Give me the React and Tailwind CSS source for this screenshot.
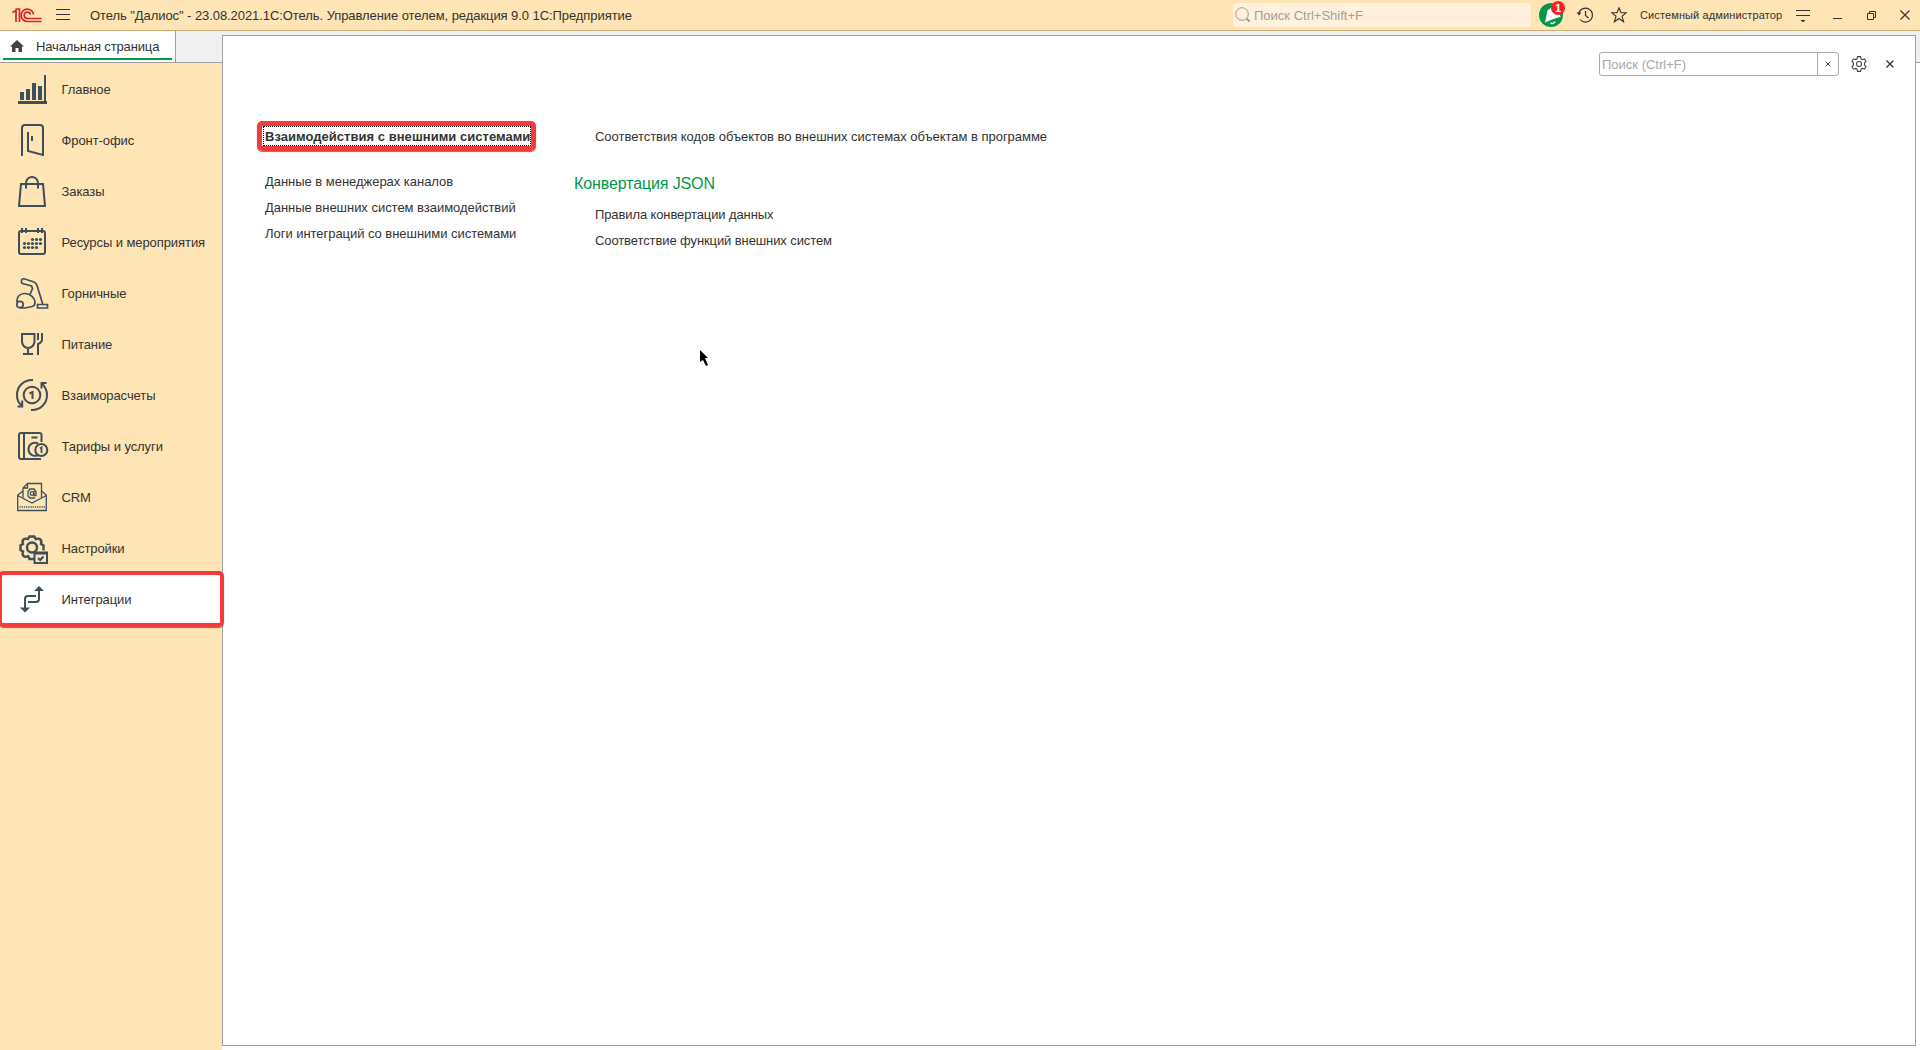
import React from 'react';
import clsx from 'clsx';

const ink = '#3d4f5a';

function Icon({ children, width = 2 }) {
  return (
    <svg
      viewBox="0 0 32 32"
      className="mt-[9px] size-8 shrink-0 overflow-visible"
      fill="none"
      stroke={ink}
      strokeWidth={width}
    >
      {children}
    </svg>
  );
}

const ChartIcon = () => (
  <Icon>
    <path
      d="M2 28h29v3H2zM28 2h2v26h-2zM4 19h4v8H4zM10 16h4v11h-4zM16 10h4v17h-4zM22 13h4v14h-4z"
      fill={ink}
      stroke="none"
    />
  </Icon>
);

const DoorIcon = () => (
  <Icon>
    <path d="M6 32V4q0-3 3-3h15q3 0 3 3v27L12 27V8M16 12v5" />
  </Icon>
);

const BagIcon = () => (
  <Icon>
    <path d="M5 9h22l2 22H3zM10 13.5V8a6 6 0 0 1 12 0v5.5" />
  </Icon>
);

const calendarDots = [
  [16.5, 13.5], [20.5, 13.5], [24.5, 13.5],
  [8.5, 17.5], [12.5, 17.5], [16.5, 17.5], [20.5, 17.5], [24.5, 17.5],
  [8.5, 21.5], [12.5, 21.5], [16.5, 21.5], [20.5, 21.5],
];

const CalendarIcon = () => (
  <Icon>
    <rect x="3" y="5" width="26" height="23" rx="2" />
    <path d="M6 2v5M10 2v5M22 2v5M26 2v5" />
    {calendarDots.map(([x, y]) => (
      <circle key={`${x}-${y}`} cx={x} cy={y} r="1.6" fill={ink} stroke="none" />
    ))}
  </Icon>
);

const VacuumIcon = () => (
  <Icon width={1.7}>
    <path d="M14 17.5l2.5-6-1-2.5L6.500 6.500Q5 5.500 5.500 3.500T8 1.800L18 5q2.500 1 3.200 4l5.500 18" />
    <path d="M1 25V23c.5-4 4-6.500 8-6.500 5.500 0 10 4.500 10 9 0 2-1 3.500-3 4L9 31H4" />
    <circle cx="4" cy="27.5" r="3.2" />
    <path d="M21.500 27.500h10V31h-10z" />
  </Icon>
);

const FoodIcon = () => (
  <Icon width={2}>
    <path d="M6 6h12.500v8q-1 5.500-6.500 6Q7 19.500 6 14zM12 20v6M7 26h10" />
    <path d="M26 5v6.500q0 3-4 4.500v11" />
    <path d="M22 5v7" />
  </Icon>
);

const SettlementsIcon = () => (
  <Icon width={2}>
    <circle cx="16" cy="16" r="8.3" />
    <path d="M13.500 14.500L16.500 13v7" strokeWidth="2" />
    <path d="M17 1C8 .7 1 7 1 16q0 7 5 11M15 31c9 .3 16-6 16-15q0-6.500-5-11.500" />
    <path d="M1.500 27.500h4.700V21.500M30.500 4h-5v5.500" />
  </Icon>
);

const TariffsIcon = () => (
  <Icon width={2}>
    <path d="M25.500 12V5q0-2-2-2H5Q3 3 3 5v22q0 2 2 2h20M8 3v26M15.500 7.500h6" />
    <path d="M22 13.500A6.500 6.500 0 1 0 22 25" />
    <circle cx="25.3" cy="20" r="6" />
    <path d="M24 18.500l1.500-1V23" strokeWidth="1.800" />
  </Icon>
);

const CrmIcon = () => (
  <Icon width={1.3}>
    <path d="M7 16.500V7l4.500-4.500h14v14M7 7h4.500V2.500" />
    <path d="M7 10L1.700 14v15.500h28.600V14L25.500 10M1.700 14.500L16 22l14.300-7.500" />
    <path d="M3.500 26H29" strokeDasharray="1.2 1" strokeWidth="1.6" />
    <circle cx="16" cy="12.5" r="1.8" />
    <path d="M18 10v4.500h2v-4l-2-2.500h-4l-2 2.500V15l2 2h5" />
  </Icon>
);

const SettingsIcon = () => (
  <Icon width={2.4}>
    <circle cx="16" cy="15.5" r="5" />
    <path d="M18 27h-4.500l-1.300-2.800q-3 1.300-4.700-.2t-.5-4.500L4.500 18v-4.500L7 12q-1.200-3 .5-4.500t4.500-.5L13.500 4.500h4.700L19.800 7q3-1 4.600.5t.6 4.500l2.500 1.500v5" />
    <path d="M18.500 20.500h12.500v10.500H18.500z" fill="#ffe4b5" strokeWidth="2" />
    <path d="M18 21.500h13.500" strokeWidth="2" />
    <path d="M22 26l2.200 2 3.300-3.500" strokeWidth="2" />
  </Icon>
);

const IntegrationIcon = () => (
  <Icon width={2}>
    <path d="M9 25v-9q0-3 3-3h8M23 7v9q0 3-3 3h-8" />
    <path d="M23 3l5 5H18zM9 29.500L4 24.500h10z" fill={ink} stroke="none" />
  </Icon>
);

const sections = [
  { label: 'Главное', icon: ChartIcon },
  { label: 'Фронт-офис', icon: DoorIcon },
  { label: 'Заказы', icon: BagIcon },
  { label: 'Ресурсы и мероприятия', icon: CalendarIcon },
  { label: 'Горничные', icon: VacuumIcon },
  { label: 'Питание', icon: FoodIcon },
  { label: 'Взаиморасчеты', icon: SettlementsIcon },
  { label: 'Тарифы и услуги', icon: TariffsIcon },
  { label: 'CRM', icon: CrmIcon },
  { label: 'Настройки', icon: SettingsIcon },
  { label: 'Интеграции', icon: IntegrationIcon, active: true },
];

function Logo() {
  return (
    <svg viewBox="0 0 30 15" className="h-[15px] w-[30px]" fill="none" stroke="#dc2226" strokeWidth="1.7">
      <path d="M.3 4.500L4 2.500V14M3.500 1h4V14" />
      <path d="M21.500 6.500A6.200 6.200 0 1 0 15.500 13.500H29.500" />
      <path d="M18.500 6.500A3.200 3.200 0 1 0 15.500 10.500H29.500" />
    </svg>
  );
}

function TitleBar() {
  return (
    <header className="flex h-[31px] shrink-0 items-center border-b border-[#cfb07c] bg-[#ffe4b5] pl-3 text-[#333]">
      <Logo />
      <svg viewBox="0 0 14 12" className="ml-[14px] h-3 w-[14px]" stroke="#333">
        <path d="M0 .5h14M0 5.500h14M0 10.500h14" />
      </svg>
      <h1 className="ml-5 pt-px text-[13px] tracking-[-0.07px]">
        Отель "Далиос" - 23.08.2021.1С:Отель. Управление отелем, редакция 9.0 1С:Предприятие
      </h1>
      <div className="ml-auto flex h-6 w-[298px] items-center rounded-[3px] bg-[#fff1dc] pl-[2px] text-[13px] text-[#a0a0a0]">
        <svg viewBox="0 0 16 16" className="mr-[3px] size-4" fill="none" stroke="#999">
          <circle cx="7" cy="7" r="6.3" />
          <path d="M11.500 11.500l3 3" strokeWidth="2" />
        </svg>
        <span className="pt-px">Поиск Ctrl+Shift+F</span>
      </div>
      <div className="relative ml-2 size-6">
        <svg viewBox="0 0 24 24" className="size-6">
          <circle cx="12" cy="12" r="12" fill="#009846" />
          <path d="M6 19.500L8.500 7.500 13 4l9 9.500-9 3z" fill="#fff" />
          <path d="M11.500 20q3 1.500 4.500-1.500" stroke="#fff" strokeWidth="1.500" fill="none" />
        </svg>
        <span className="absolute -top-[2px] left-[12px] flex size-[14px] items-center justify-center rounded-full bg-[#fb2028] text-[11px] font-bold text-white">
          1
        </span>
      </div>
      <svg viewBox="0 0 16 16" className="ml-[14px] size-4 overflow-visible" fill="none" stroke="#333" strokeWidth="1.2">
        <path d="M1.800 6A7 7 0 1 1 3 12.500M8.500 4v4.500l3 2.500" />
        <path d="M-.5 5.500h5L2 8.500z" fill="#333" stroke="none" />
      </svg>
      <svg viewBox="0 0 16 16" className="ml-[18px] size-4" fill="none" stroke="#333" strokeWidth="1.1">
        <path d="M8 .8l2 5h5.200L11 9.300l1.600 5.500L8 11.500l-4.600 3.300L5 9.300.8 5.800H6z" />
      </svg>
      <span className="ml-[13px] w-[142px] pt-px text-[11px] tracking-[0.12px] whitespace-nowrap">
        Системный администратор
      </span>
      <svg viewBox="0 0 14 14" className="ml-[14px] h-[14px] w-[14px]" stroke="#333">
        <path d="M0 2.500h14M0 7.500h14" />
        <path d="M4.500 12h5L7 14.500z" fill="#333" stroke="none" />
      </svg>
      <svg viewBox="0 0 9 10" className="ml-[23px] h-[10px] w-[9px]" stroke="#333">
        <path d="M0 8.500h9" />
      </svg>
      <svg viewBox="0 0 9 9" className="ml-[25px] size-[9px]" fill="none" stroke="#333">
        <path d="M.5 2.500h6v6h-6zM2.500 2.500v-2h6v6h-2" />
      </svg>
      <svg viewBox="0 0 10 10" className="mr-[10px] ml-6 size-[10px]" stroke="#333" strokeWidth="1.2">
        <path d="M.5.5l9 9M9.500.5l-9 9" />
      </svg>
    </header>
  );
}

function Sidebar() {
  return (
    <aside className="flex w-[222px] shrink-0 flex-col bg-[#ffe4b5]">
      <div className="flex h-8 border-b border-[#a0a0a0] bg-[#f0f0f0]">
        <div className="flex w-[176px] flex-col border-r border-[#a0a0a0] bg-white">
          <div className="flex h-[27px] items-center pt-1 pl-[10px]">
            <svg viewBox="0 0 14 12" className="-mt-px h-3 w-[14px] text-[#444]" fill="currentColor">
              <path d="M7 0l7 6.500h-2V12H8.500V8h-3v4H2V6.500H0z" />
            </svg>
            <span className="ml-3 text-[13px] tracking-[-0.14px] text-[#333]">Начальная страница</span>
          </div>
          <div className="mx-[3px] h-[2px] bg-[#009846]" />
        </div>
      </div>
      <nav className="pt-px">
        {sections.map(({ label, icon: SectionIcon, active }) => (
          <div key={label} className={clsx('relative flex h-[51px] pl-4', active && 'bg-white')}>
            <SectionIcon />
            <span className="ml-[13.5px] text-[13px] leading-[51px] tracking-[-0.08px] whitespace-nowrap text-[#333]">
              {label}
            </span>
            {active && (
              <div className="absolute -inset-x-[2px] -top-[3px] -bottom-[2px] z-10 rounded-[5px] border-4 border-[#f53b3b] shadow-[0_1px_1px_#777]" />
            )}
          </div>
        ))}
      </nav>
    </aside>
  );
}

function PanelTools() {
  return (
    <div className="flex h-6 items-center justify-end pr-5 text-[#444]">
      <div className="flex h-6 w-[240px] rounded-[3px] border border-[#aaa]">
        <span className="flex-1 pl-[2px] text-[13px] leading-[23px] text-[#a8a8a8]">Поиск (Ctrl+F)</span>
        <span className="flex w-[21px] items-center justify-center border-l border-[#aaa]">
          <svg viewBox="0 0 6 6" className="size-[6px]" stroke="#444">
            <path d="M.5.5l5 5M5.500.5l-5 5" />
          </svg>
        </span>
      </div>
      <svg viewBox="0 0 16 16" className="ml-3 size-4" fill="none" stroke="#444" strokeWidth="1.1">
        <circle cx="8" cy="8" r="2.5" />
        <path d="M6.500.6h3l.5 2.200 1.300.8 2.200-.8 1.500 2.600L13.500 7v2l1.500 1.600-1.500 2.600-2.200-.8-1.300.8-.5 2.200h-3L6 13.200l-1.300-.8-2.200.8L1 10.600 2.500 9V7L1 5.400l1.500-2.600 2.200.8L6 2.800z" />
      </svg>
      <svg viewBox="0 0 8 8" className="mr-px ml-[19px] size-2" stroke="#333" strokeWidth="1.3">
        <path d="M.5.5l7 7M7.500.5l-7 7" />
      </svg>
    </div>
  );
}

function Command({ className, children }) {
  return (
    <a className={clsx('block h-[26px] text-[13px] leading-[26px] whitespace-nowrap', className)}>{children}</a>
  );
}

export default function App() {
  return (
    <div className="flex h-[1050px] w-[1920px] flex-col overflow-hidden bg-white font-['Liberation_Sans',Arial,sans-serif] text-[#333]">
      <TitleBar />
      <div className="flex min-h-0 flex-1">
        <Sidebar />
        <div className="flex flex-1 flex-col">
          <div className="h-1 bg-[#f0f0f0]" />
          <div className="flex h-[1011px]">
            <main className="relative w-[1694px] border border-[#a0a0a0] bg-white pt-4">
              <PanelTools />
              <div className="flex pt-12">
                <div className="w-[351px] pt-[2px] pl-10">
                  <div className="relative mb-[23px] h-5 w-[268px] border border-dotted border-black pl-px text-[13px] leading-[19px] font-bold tracking-[0.03px] whitespace-nowrap">
                    Взаимодействия с внешними системами
                    <div className="absolute -inset-y-[6px] -right-[6px] -left-[7px] rounded-[5px] border-[5px] border-[#f53b3b] shadow-[0_1px_1px_#777]" />
                  </div>
                  <div className="pl-[2px]">
                    <Command className="tracking-[-0.03px]">Данные в менеджерах каналов</Command>
                    <Command className="tracking-[-0.03px]">Данные внешних систем взаимодействий</Command>
                    <Command className="tracking-[-0.04px]">Логи интеграций со внешними системами</Command>
                  </div>
                </div>
                <div>
                  <div className="pl-[21px]">
                    <Command className="tracking-[-0.03px]">
                      Соответствия кодов объектов во внешних системах объектам в программе
                    </Command>
                  </div>
                  <h2 className="mt-[22px] mb-[6px] text-base leading-[24px] tracking-[-0.12px] text-[#009846]">
                    Конвертация JSON
                  </h2>
                  <div className="pl-[21px]">
                    <Command className="tracking-[-0.11px]">Правила конвертации данных</Command>
                    <Command className="tracking-[-0.1px]">Соответствие функций внешних систем</Command>
                  </div>
                </div>
              </div>
              <svg viewBox="0 0 8 16" className="absolute top-[314px] left-[477px] h-4 w-2" fill="#000">
                <path d="M0 0l8 8H5l3 7-2 1-3-6-3 2z" />
              </svg>
            </main>
            <div className="h-[28px] flex-1 border-b border-[#a0a0a0] bg-[#f0f0f0]" />
          </div>
        </div>
      </div>
    </div>
  );
}
